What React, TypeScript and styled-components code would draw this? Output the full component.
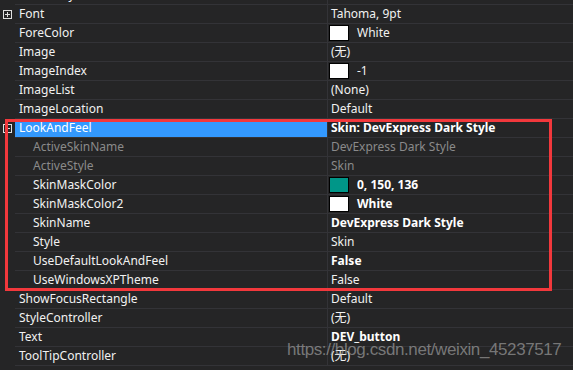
import React from 'react';
import styled, { createGlobalStyle } from 'styled-components';

const GlobalStyle = createGlobalStyle`
    html, body {
        margin: 0;
        padding: 0;
        background: #252526;
    }
    body {
        font-family: "Noto Sans", "Noto Sans CJK SC", sans-serif;
        font-size: 12px;
        color: #f1f1f1;
    }
`;

const Viewport = styled.div`
    position: relative;
    width: 573px;
    height: 370px;
    overflow: hidden;
    background: #252526;
`;

// the grid is scrolled a little: only the tail of the row above Font shows
const List = styled.div`
    display: flex;
    flex-direction: column;
    margin-top: -14px;
`;

const Row = styled.div`
    display: grid;
    grid-template-columns: 15px 312px 1fr;
    height: 19px;
`;

const Gutter = styled.div`
    display: flex;
    align-items: center;
    padding-left: 3px;
`;

interface NameProps {
    $indent?: boolean;
    $selected?: boolean;
    $dim?: boolean;
}

const Name = styled.div<NameProps>`
    display: flex;
    align-items: center;
    padding-left: ${props => (props.$indent ? '18px' : '4px')};
    border-bottom: 1px solid #333337;
    background: ${props => (props.$selected ? '#3399ff' : 'transparent')};
    color: ${props => (props.$selected ? '#ffffff' : props.$dim ? '#8a8a8a' : '#f1f1f1')};
    white-space: nowrap;
    line-height: 18px;
`;

interface ValueProps {
    $bold?: boolean;
    $dim?: boolean;
}

const Value = styled.div<ValueProps>`
    display: flex;
    align-items: center;
    gap: 8px;
    padding-left: 3px;
    border-left: 1px solid #333337;
    border-bottom: 1px solid #333337;
    font-weight: ${props => (props.$bold ? 700 : 400)};
    color: ${props => (props.$dim ? '#8a8a8a' : props.$bold ? '#ffffff' : '#f1f1f1')};
    white-space: nowrap;
    line-height: 18px;
`;

const Swatch = styled.span<{ $color: string }>`
    width: 18px;
    height: 14px;
    margin-left: -2px;
    border: 1px solid #000;
    background: ${props => props.$color};
`;

const Group = styled.div`
    position: relative;
    display: flex;
    flex-direction: column;

    &::after {
        content: '';
        position: absolute;
        top: 0;
        bottom: -1px;
        left: 5px;
        width: 541px;
        border: 3px solid #f2383c;
        pointer-events: none;
    }
`;

const Category = styled.div`
    display: flex;
    align-items: center;
    gap: 8px;
    height: 19px;
    padding-left: 3px;
    font-weight: 700;
    font-size: 14px;
`;

const Watermark = styled.div`
    position: absolute;
    left: 287px;
    top: 340px;
    font-family: "Liberation Sans", Arial, sans-serif;
    font-size: 17px;
    letter-spacing: -0.4px;
    color: rgba(190, 190, 190, 0.55);
    white-space: nowrap;
    pointer-events: none;
`;

const Expander = ({ open }: { open?: boolean }) => (
    <svg width="9" height="9" viewBox="0 0 9 9">
        <rect x="0.5" y="0.5" width="8" height="8" fill="none" stroke="#e0e0e0" />
        <line x1="2" y1="4.5" x2="7" y2="4.5" stroke="#e0e0e0" />
        {!open && <line x1="4.5" y1="2" x2="4.5" y2="7" stroke="#e0e0e0" />}
    </svg>
);

interface Prop {
    name: string;
    value: string;
    swatch?: string;
    bold?: boolean;
    dim?: boolean;
    expandable?: boolean;
    open?: boolean;
    selected?: boolean;
    indent?: boolean;
}

const before: Prop[] = [
    { name: 'ButtonStyle', value: 'Default' },
    { name: 'Font', value: 'Tahoma, 9pt', expandable: true },
    { name: 'ForeColor', value: 'White', swatch: '#ffffff' },
    { name: 'Image', value: '(无)' },
    { name: 'ImageIndex', value: '-1', swatch: '#ffffff' },
    { name: 'ImageList', value: '(None)' },
    { name: 'ImageLocation', value: 'Default' },
];

const lookAndFeel: Prop[] = [
    { name: 'LookAndFeel', value: 'Skin: DevExpress Dark Style', bold: true, expandable: true, open: true, selected: true },
    { name: 'ActiveSkinName', value: 'DevExpress Dark Style', dim: true, indent: true },
    { name: 'ActiveStyle', value: 'Skin', dim: true, indent: true },
    { name: 'SkinMaskColor', value: '0, 150, 136', swatch: '#009688', bold: true, indent: true },
    { name: 'SkinMaskColor2', value: 'White', swatch: '#ffffff', bold: true, indent: true },
    { name: 'SkinName', value: 'DevExpress Dark Style', bold: true, indent: true },
    { name: 'Style', value: 'Skin', indent: true },
    { name: 'UseDefaultLookAndFeel', value: 'False', bold: true, indent: true },
    { name: 'UseWindowsXPTheme', value: 'False', indent: true },
];

const after: Prop[] = [
    { name: 'ShowFocusRectangle', value: 'Default' },
    { name: 'StyleController', value: '(无)' },
    { name: 'Text', value: 'DEV_button', bold: true },
    { name: 'ToolTipController', value: '(无)' },
];

const PropRow = ({ item }: { item: Prop }) => (
    <Row>
        <Gutter>{item.expandable && <Expander open={item.open} />}</Gutter>
        <Name $indent={item.indent} $selected={item.selected} $dim={item.dim}>
            {item.name}
        </Name>
        <Value $bold={item.bold} $dim={item.dim}>
            {item.swatch && <Swatch $color={item.swatch} />}
            {item.value}
        </Value>
    </Row>
);

const App = () => (
    <Viewport>
        <GlobalStyle />
        <List>
            {before.map(item => (
                <PropRow key={item.name} item={item} />
            ))}
            <Group>
                {lookAndFeel.map(item => (
                    <PropRow key={item.name} item={item} />
                ))}
            </Group>
            {after.map(item => (
                <PropRow key={item.name} item={item} />
            ))}
            <Category>
                <Expander open />
                Text Options
            </Category>
        </List>
        <Watermark>https://blog.csdn.net/weixin_45237517</Watermark>
    </Viewport>
);

export default App;
